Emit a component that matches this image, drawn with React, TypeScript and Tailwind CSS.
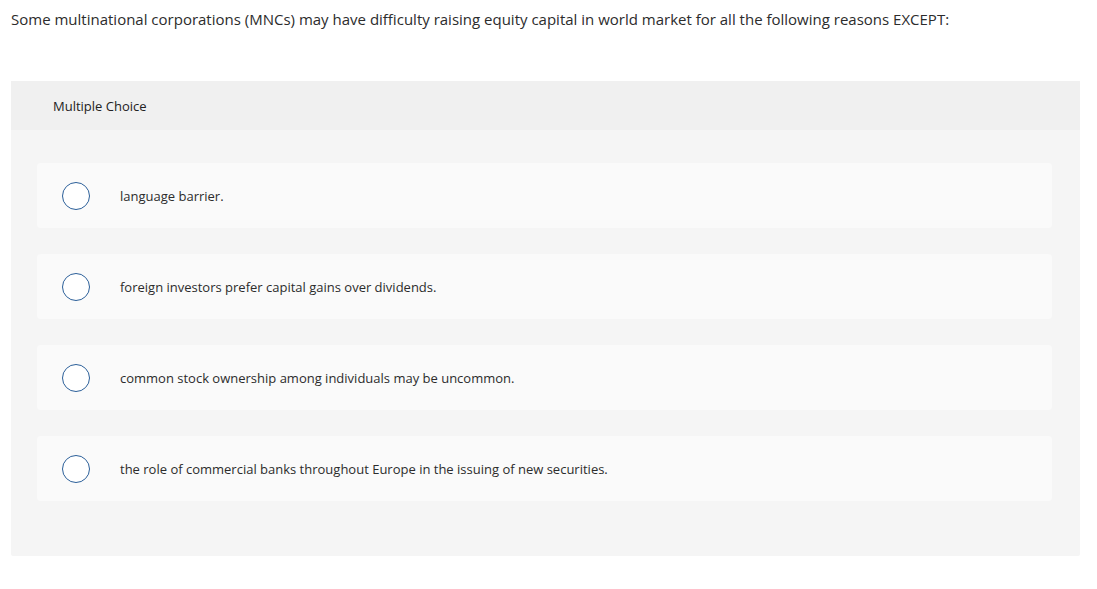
import React from "react";

const options = [
  "language barrier.",
  "foreign investors prefer capital gains over dividends.",
  "common stock ownership among individuals may be uncommon.",
  "the role of commercial banks throughout Europe in the issuing of new securities.",
];

export default function App() {
  return (
    <div className="w-[1097px] h-[589px] bg-white text-[#222]" style={{ fontFamily: "'Open Sans', sans-serif" }}>
      <div className="pl-[11px] pt-[9px] text-[15px] leading-[20px] text-[#2c2c2c]">
        Some multinational corporations (MNCs) may have difficulty raising equity capital in world market for all the following reasons EXCEPT:
      </div>
      <div className="ml-[11px] mt-[52px] w-[1069px] rounded-[2px] bg-[#f5f5f5]">
        <div className="h-[49px] bg-[#f0f0f0] pl-[42px] flex items-center text-[13px] text-[#222] pt-[2px]">Multiple Choice</div>
        <div className="pt-[33px] pb-[55px] pl-[26px] pr-[28px] flex flex-col gap-[26px]">
          {options.map((o) => (
            <div key={o} className="h-[65px] rounded-[4px] bg-[#fafafa] flex items-center pl-[25px]">
              <div className="w-[28px] h-[28px] rounded-full border-[1.5px] border-[#2b5f99] bg-white shrink-0" />
              <div className="ml-[30px] text-[13px] text-[#2c2c2c] pt-[2px]">{o}</div>
            </div>
          ))}
        </div>
      </div>
    </div>
  );
}
